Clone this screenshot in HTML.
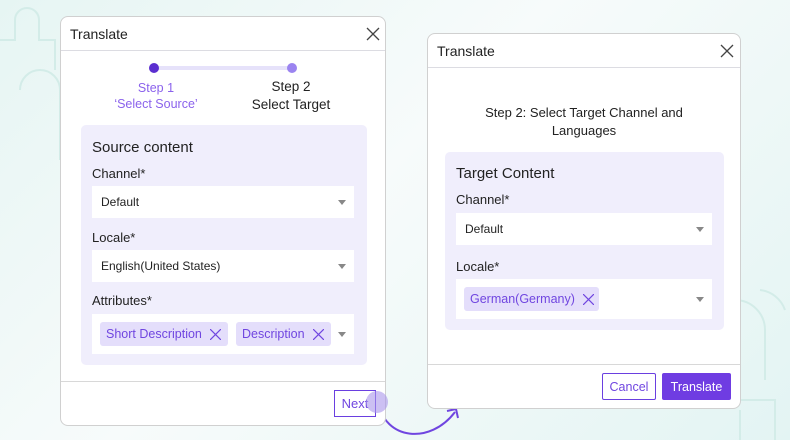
<!DOCTYPE html><html><head><style>
*{box-sizing:border-box;margin:0;padding:0}
body{width:790px;height:440px;overflow:hidden;position:relative;font-family:"Liberation Sans",sans-serif;color:#222;
background:linear-gradient(135deg,#e6f5f3 0%,#f7fbfb 45%,#eef8f7 70%,#e3f4f3 100%)}
.dlg{position:absolute;background:#fff;border:1px solid #d0d0d0;border-radius:8px}
.hd{position:absolute;left:0;right:0;top:0;border-bottom:1px solid #dcdce2;font-size:14px;padding-left:9px}
.x{position:absolute;width:14px;height:14px}
.panel{position:absolute;background:#f0eefc;border-radius:5px}
.lbl{position:absolute;font-size:13px;color:#222}
.sel{position:absolute;background:#fff;font-size:12px;padding-left:9px;display:flex;align-items:center}
.car{position:absolute;right:8px;top:50%;margin-top:-2px;border-left:4px solid transparent;border-right:4px solid transparent;border-top:5px solid #888}
.tag{position:absolute;background:#e4defb;border-radius:3px;color:#7046e0;font-size:12.5px;display:flex;align-items:center;padding-left:6px}
.ft{position:absolute;left:0;right:0;border-top:1px solid #d8d8d8}
.btn{position:absolute;font-size:12px;display:flex;align-items:center;justify-content:center}
</style></head><body>
<svg style="position:absolute;left:0;top:0" width="790" height="440">
<g fill="none" stroke="#d3ece8" stroke-width="2">
<path d="M0 40 H15 V20 a12 12 0 0 1 24 0 V40 H55 V70"/>
<path d="M20 90 a20 20 0 0 1 40 0 V160"/>
<path d="M735 300 a30 30 0 0 1 30 30 V380 M725 400 H775 V440 M740 440 V410"/>
<path d="M760 290 a30 30 0 0 1 25 20"/>
</g>
<path d="M378 402 C385 440 430 445 455 412" fill="none" stroke="#7046e0" stroke-width="2"/>
<path d="M447 411 L456 409 L458 418" fill="none" stroke="#7046e0" stroke-width="2"/>
</svg>

<div class="dlg" style="left:60px;top:16px;width:326px;height:410px">
 <div class="hd" style="height:34px;line-height:34px">Translate</div>
 <svg class="x" style="left:305px;top:10px" viewBox="0 0 14 14"><path d="M1 1L13 13M13 1L1 13" stroke="#444" stroke-width="1.3"/></svg>
 <div style="position:absolute;left:93px;top:49px;width:138px;height:4px;background:#e6e2fa"></div>
 <div style="position:absolute;left:88px;top:46px;width:10px;height:10px;border-radius:50%;background:#5b2fd0"></div>
 <div style="position:absolute;left:226px;top:46px;width:10px;height:10px;border-radius:50%;background:#9b84f0"></div>
 <div style="position:absolute;left:30px;top:63px;width:130px;text-align:center;color:#8b62ec;font-size:12.5px;line-height:16px">Step 1<br>‘Select Source’</div>
 <div style="position:absolute;left:165px;top:61px;width:130px;text-align:center;color:#222;font-size:13.5px;line-height:18px">Step 2<br>Select Target</div>
 <div class="panel" style="left:20px;top:108px;width:286px;height:240px">
  <div class="lbl" style="left:11px;top:14px;font-size:15px">Source content</div>
  <div class="lbl" style="left:11px;top:41px">Channel*</div>
  <div class="sel" style="left:11px;top:61px;width:262px;height:32px">Default<div class="car"></div></div>
  <div class="lbl" style="left:11px;top:105px">Locale*</div>
  <div class="sel" style="left:11px;top:125px;width:262px;height:32px">English(United States)<div class="car"></div></div>
  <div class="lbl" style="left:11px;top:168px">Attributes*</div>
  <div class="sel" style="left:11px;top:189px;width:262px;height:40px"><div class="car"></div></div>
  <div class="tag" style="left:19px;top:197px;width:128px;height:24px">Short Description<svg style="margin-left:8px" width="11" height="11"><path d="M0 0L11 11M11 0L0 11" stroke="#7046e0" stroke-width="1.2"/></svg></div>
  <div class="tag" style="left:155px;top:197px;width:95px;height:24px">Description<svg style="margin-left:8px" width="11" height="11"><path d="M0 0L11 11M11 0L0 11" stroke="#7046e0" stroke-width="1.2"/></svg></div>
 </div>
 <div class="ft" style="top:364px"></div>
 <div class="btn" style="left:273px;top:373px;width:42px;height:27px;border:1px solid #6a3fe0;color:#7046e0;font-size:13px">Next</div>
 <div style="position:absolute;left:305px;top:374px;width:22px;height:22px;border-radius:50%;background:rgba(170,150,235,.6)"></div>
</div>

<div class="dlg" style="left:427px;top:33px;width:314px;height:376px">
 <div class="hd" style="height:34px;line-height:34px">Translate</div>
 <svg class="x" style="left:292px;top:10px" viewBox="0 0 14 14"><path d="M1 1L13 13M13 1L1 13" stroke="#444" stroke-width="1.3"/></svg>
 <div style="position:absolute;left:0;right:0;top:70px;text-align:center;font-size:13px;line-height:18px">Step 2: Select Target Channel and<br>Languages</div>
 <div class="panel" style="left:17px;top:118px;width:279px;height:178px">
  <div class="lbl" style="left:11px;top:13px;font-size:15px">Target Content</div>
  <div class="lbl" style="left:11px;top:40px">Channel*</div>
  <div class="sel" style="left:11px;top:61px;width:256px;height:32px">Default<div class="car"></div></div>
  <div class="lbl" style="left:11px;top:107px">Locale*</div>
  <div class="sel" style="left:11px;top:127px;width:256px;height:40px"><div class="car"></div></div>
  <div class="tag" style="left:19px;top:135px;width:135px;height:24px">German(Germany)<svg style="margin-left:8px" width="11" height="11"><path d="M0 0L11 11M11 0L0 11" stroke="#7046e0" stroke-width="1.2"/></svg></div>
 </div>
 <div class="ft" style="top:330px"></div>
 <div class="btn" style="left:174px;top:339px;width:54px;height:27px;border:1px solid #6a3fe0;color:#7046e0;border-radius:2px;font-size:12.5px">Cancel</div>
 <div class="btn" style="left:234px;top:339px;width:69px;height:27px;background:#6f3ce2;color:#fff;border-radius:2px;font-size:12.5px">Translate</div>
</div>
</body></html>
